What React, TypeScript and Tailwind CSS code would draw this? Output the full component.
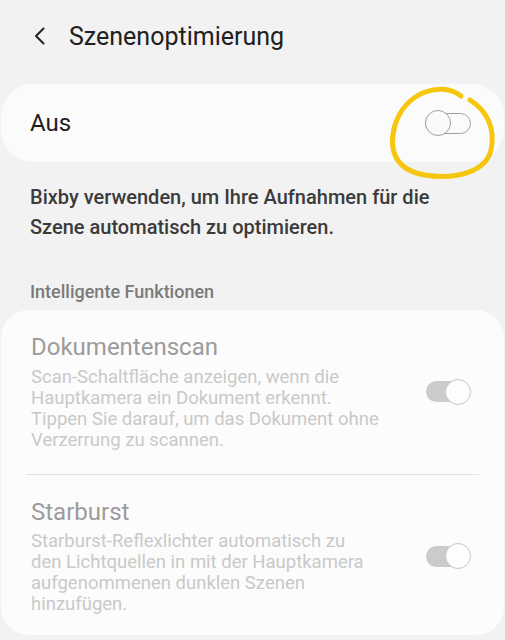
import React from "react";

function Toggle({ on }: { on: boolean }) {
  if (on) {
    return (
      <div className="relative w-[45px] h-[26px] shrink-0 flex items-center">
        <div className="w-[44px] h-[21px] rounded-full bg-[#cbcbcb]" />
        <div className="absolute right-0 top-0 w-[26px] h-[26px] rounded-full bg-[#fdfdfd] border-[1.5px] border-[#c6c6c6]" />
      </div>
    );
  }
  return (
    <div className="relative w-[46px] h-[26px] shrink-0 flex items-center">
      <div className="w-[46px] h-[21px] rounded-full border-[1.5px] border-[#a0a0a0]" />
      <div className="absolute left-0 top-0 w-[26px] h-[26px] rounded-full bg-[#fafafa] border-[1.5px] border-[#a0a0a0]" />
    </div>
  );
}

const features = [
  {
    title: "Dokumentenscan",
    lines: [
      "Scan-Schaltfläche anzeigen, wenn die",
      "Hauptkamera ein Dokument erkennt.",
      "Tippen Sie darauf, um das Dokument ohne",
      "Verzerrung zu scannen.",
    ],
  },
  {
    title: "Starburst",
    lines: [
      "Starburst-Reflexlichter automatisch zu",
      "den Lichtquellen in mit der Hauptkamera",
      "aufgenommenen dunklen Szenen",
      "hinzufügen.",
    ],
  },
];

export default function App() {
  return (
    <div
      className="relative w-[505px] h-[640px] overflow-hidden bg-[#f2f2f2]"
      style={{ fontFamily: "Roboto, 'Noto Sans', sans-serif" }}
    >
      {/* Header */}
      <div className="flex items-center h-[72px] pl-[33px]">
        <svg width="13" height="18" viewBox="0 0 13 18" className="shrink-0">
          <path d="M10.5 1.5 L3 9 L10.5 16.5" fill="none" stroke="#222" strokeWidth="2" strokeLinecap="round" strokeLinejoin="round" />
        </svg>
        <span className="ml-[23px] text-[25px] text-[#202020] leading-none">Szenenoptimierung</span>
      </div>

      {/* Main switch */}
      <div className="mt-[12px] mx-[1px] h-[78px] rounded-[32px] bg-[#fbfbfb] flex items-center justify-between pl-[29px] pr-[33px]">
        <span className="text-[24px] text-[#1e1e1e]">Aus</span>
        <Toggle on={false} />
      </div>

      {/* Description */}
      <div className="mt-[20px] px-[30px] text-[20px] leading-[30px] font-medium text-[#3b3b3b]">
        Bixby verwenden, um Ihre Aufnahmen für die
        <br />
        Szene automatisch zu optimieren.
      </div>

      {/* Section header */}
      <div className="mt-[39px] px-[30px] text-[18px] leading-[22px] font-medium text-[#7a7a7a]">
        Intelligente Funktionen
      </div>

      {/* Feature card */}
      <div className="mt-[7px] mx-[1px] rounded-[28px] bg-[#fcfcfc] pt-[23px] pb-[20px]">
        {features.map((f, i) => (
          <div key={f.title}>
            {i > 0 && <div className="mx-[25px] mt-[23px] mb-[23px] h-px bg-[#e2e2e2]" />}
            <div className="flex items-center justify-between pl-[30px] pr-[33px]">
              <div>
                <div className="text-[24px] leading-[28px] text-[#9b9b9b]">{f.title}</div>
                <div className="mt-[5.5px] text-[18.5px] leading-[21px] text-[#c9c9c9]">
                  {f.lines.map((l) => (
                    <div key={l} className="whitespace-nowrap">{l}</div>
                  ))}
                </div>
              </div>
              <Toggle on={true} />
            </div>
          </div>
        ))}
      </div>

      {/* Hand-drawn highlight */}
      <svg className="absolute left-0 top-0 pointer-events-none" width="505" height="640" viewBox="0 0 505 640">
        <path
          d="M461 96 C 440 80, 405 93, 395 125 C 388 150, 395 170, 425 175 C 455 180, 486 172, 491 150 C 496 128, 486 110, 470 100"
          fill="none"
          stroke="#f6c60f"
          strokeWidth="5"
          strokeLinecap="round"
        />
      </svg>
    </div>
  );
}
